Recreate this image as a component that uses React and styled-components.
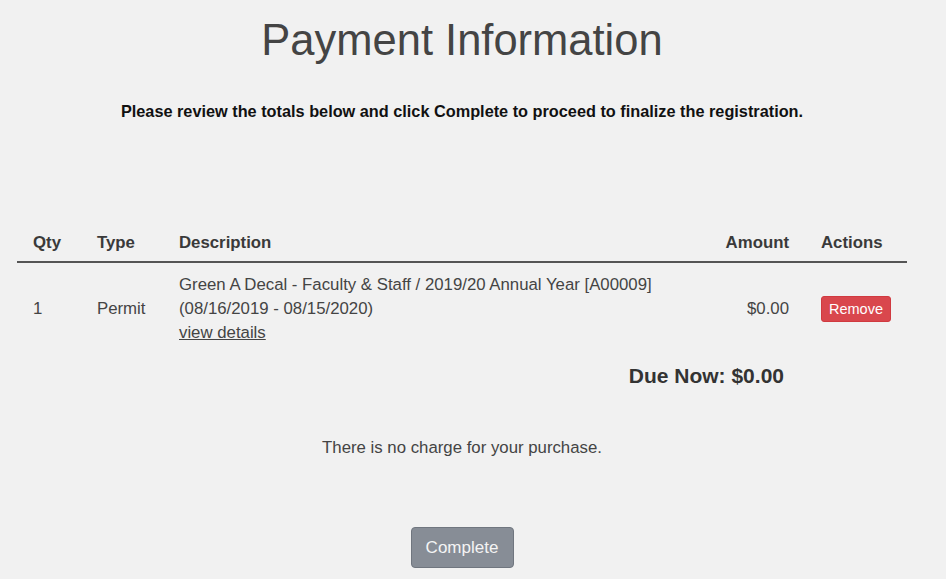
import styled, { createGlobalStyle } from 'styled-components';

const GlobalStyle = createGlobalStyle`
  html, body {
    margin: 0;
    padding: 0;
    background: #f1f1f1;
  }
  body {
    font-family: "Liberation Sans", Arial, sans-serif;
    color: #333;
  }
`

const Page = styled.div`
  width: 890px;
  margin-left: 17px;
  padding-top: 14px;
  min-height: 579px;
  box-sizing: border-box;
`

const Title = styled.h1`
  margin: 0;
  text-align: center;
  font-size: 43.5px;
  line-height: 52px;
  font-weight: normal;
  color: #444;
`

const Lead = styled.p`
  margin: 35px 0 0;
  text-align: center;
  font-size: 16.3px;
  line-height: 20px;
  font-weight: bold;
  color: #111;
`

const Table = styled.div`
  margin-top: 112px;
  display: grid;
  grid-template-columns: 64px 82px 1fr 106px 102px;
`

const HeadCell = styled.div`
  padding: 0 16px 8px;
  font-size: 16.8px;
  line-height: 20px;
  font-weight: bold;
  color: #3a3a3a;
  white-space: nowrap;
  text-align: ${p => (p.$right ? 'right' : 'left')};
  border-bottom: 2px solid #555;
`

const Cell = styled.div`
  padding: 10px 16px 8px;
  font-size: 16.8px;
  line-height: 24px;
  color: #444;
  white-space: nowrap;
  display: flex;
  flex-direction: column;
  justify-content: center;
  align-items: ${p => (p.$right ? 'flex-end' : 'flex-start')};
`

const Link = styled.a`
  color: #444;
  text-decoration: underline;
  cursor: pointer;
`

const RemoveButton = styled.button`
  font-family: inherit;
  font-size: 14.5px;
  line-height: 18px;
  padding: 3px 7px;
  color: #fff;
  background: #d9474d;
  border: 1px solid #d03a40;
  border-radius: 3px;
  cursor: pointer;
`

const Due = styled.div`
  margin-top: 10px;
  padding-right: 123px;
  text-align: right;
  font-size: 21px;
  line-height: 26px;
  font-weight: bold;
  color: #333;
`

const Note = styled.p`
  margin: 49px 0 0;
  text-align: center;
  font-size: 16.8px;
  line-height: 20px;
  color: #444;
`

const Actions = styled.div`
  margin-top: 69px;
  display: flex;
  justify-content: center;
`

const CompleteButton = styled.button`
  font-family: inherit;
  font-size: 17px;
  line-height: 22px;
  width: 103px;
  height: 41px;
  color: #f4f4f4;
  background: #878d96;
  border: 1px solid #70767f;
  border-radius: 4px;
  cursor: pointer;
`

export default function App() {
  return (
    <>
      <GlobalStyle />
      <Page>
        <Title>Payment Information</Title>
        <Lead>Please review the totals below and click Complete to proceed to finalize the registration.</Lead>
        <Table>
          <HeadCell>Qty</HeadCell>
          <HeadCell>Type</HeadCell>
          <HeadCell>Description</HeadCell>
          <HeadCell $right>Amount</HeadCell>
          <HeadCell>Actions</HeadCell>

          <Cell>1</Cell>
          <Cell>Permit</Cell>
          <Cell>
            <div>Green A Decal - Faculty &amp; Staff / 2019/20 Annual Year [A00009]</div>
            <div>(08/16/2019 - 08/15/2020)</div>
            <Link>view details</Link>
          </Cell>
          <Cell $right>$0.00</Cell>
          <Cell>
            <RemoveButton>Remove</RemoveButton>
          </Cell>
        </Table>
        <Due>Due Now: $0.00</Due>
        <Note>There is no charge for your purchase.</Note>
        <Actions>
          <CompleteButton>Complete</CompleteButton>
        </Actions>
      </Page>
    </>
  )
}
